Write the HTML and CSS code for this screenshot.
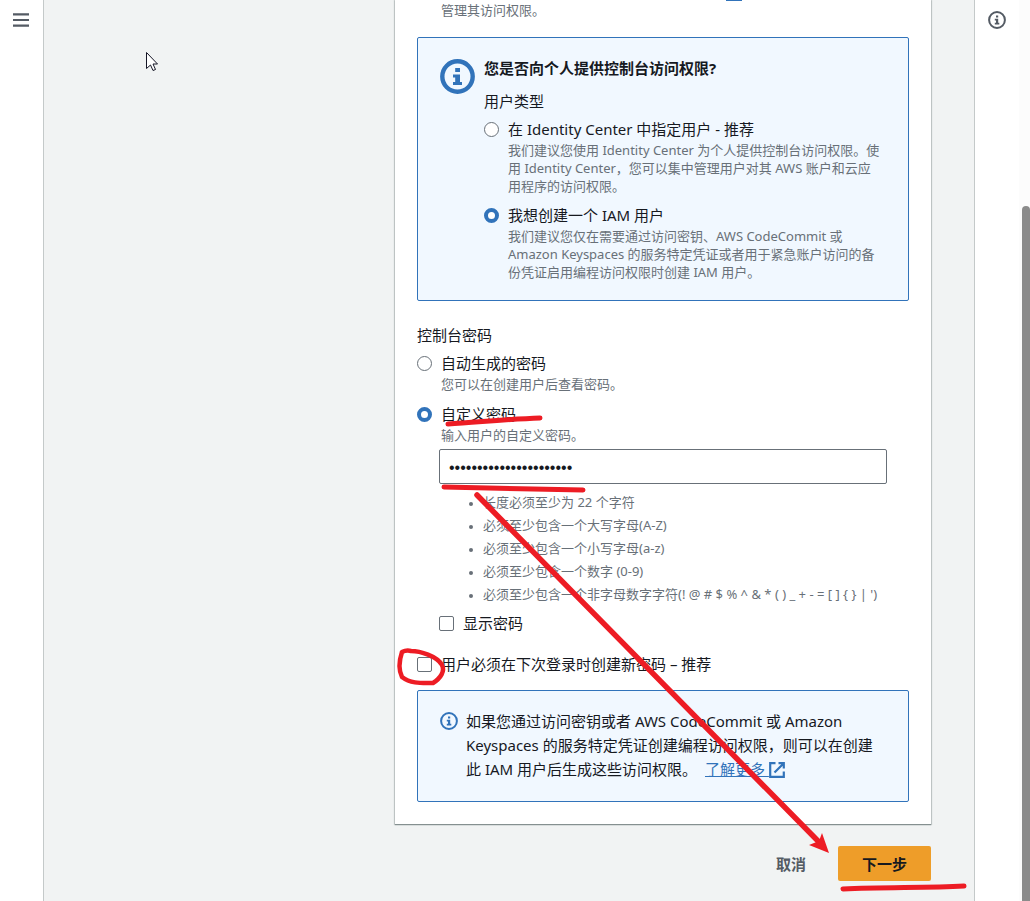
FILE: index.html
```html
<!DOCTYPE html>
<html lang="zh-CN">
<head>
<meta charset="utf-8">
<title>指定用户详细信息</title>
<link rel="stylesheet" href="styles.css">
</head>
<body>
<div class="app">
  <nav class="rail rail-left">
    <button class="icon-button" type="button" aria-label="菜单">
      <svg width="16" height="16" viewBox="0 0 16 16"><path d="M0 2.3h16M0 8h16M0 13.7h16" stroke="#545b64" stroke-width="2.2"/></svg>
    </button>
  </nav>

  <main class="main">
    <form class="card">
      <div class="link-tail"></div>
      <p class="hint intro">管理其访问权限。</p>

      <section class="alert alert-large">
        <svg class="alert-icon" width="35" height="35" viewBox="0 0 35 35"><circle cx="17.500" cy="17.500" r="15.200" fill="none" stroke="#3173ba" stroke-width="4.400"/><path d="M15.200 9h4.800v4h-4.800zM13 15.500h7v7.500h2v3h-9v-3h2.200v-4.500h-2.200z" fill="#3173ba"/></svg>
        <div class="alert-body">
          <h2 class="alert-title">您是否向个人提供控制台访问权限?</h2>
          <fieldset class="group">
            <legend class="label legend-spaced">用户类型</legend>
            <div class="choice">
              <input type="radio" name="user-type" id="identity" aria-describedby="identity-hint">
              <label class="label" for="identity">在 Identity Center 中指定用户 - 推荐</label>
              <p class="hint" id="identity-hint">我们建议您使用 Identity Center 为个人提供控制台访问权限。使<br>用 Identity Center，您可以集中管理用户对其 AWS 账户和云应<br>用程序的访问权限。</p>
            </div>
            <div class="choice">
              <input type="radio" name="user-type" id="iam" checked aria-describedby="iam-hint">
              <label class="label" for="iam">我想创建一个 IAM 用户</label>
              <p class="hint" id="iam-hint">我们建议您仅在需要通过访问密钥、AWS CodeCommit 或<br>Amazon Keyspaces 的服务特定凭证或者用于紧急账户访问的备<br>份凭证启用编程访问权限时创建 IAM 用户。</p>
            </div>
          </fieldset>
        </div>
      </section>

      <fieldset class="group password-group">
        <legend class="label legend-spaced">控制台密码</legend>
        <div class="choice">
          <input type="radio" name="password-type" id="auto" aria-describedby="auto-hint">
          <label class="label" for="auto">自动生成的密码</label>
          <p class="hint" id="auto-hint">您可以在创建用户后查看密码。</p>
        </div>
        <div class="choice">
          <input type="radio" name="password-type" id="custom" checked aria-describedby="custom-hint">
          <label class="label" for="custom">自定义密码</label>
          <p class="hint" id="custom-hint">输入用户的自定义密码。</p>
        </div>
        <div class="password-detail">
          <input class="password" type="password" value="Example-Password-22chr" aria-label="自定义密码" aria-describedby="rules">
          <ul class="rules" id="rules">
            <li>长度必须至少为 22 个字符</li>
            <li>必须至少包含一个大写字母(A-Z)</li>
            <li>必须至少包含一个小写字母(a-z)</li>
            <li>必须至少包含一个数字 (0-9)</li>
            <li>必须至少包含一个非字母数字字符(! @ # $ % ^ &amp; * ( ) _ + - = [ ] { } | ')</li>
          </ul>
          <div class="choice">
            <input type="checkbox" id="show">
            <label class="label" for="show">显示密码</label>
          </div>
        </div>
      </fieldset>

      <div class="choice reset-choice">
        <input type="checkbox" id="reset">
        <label class="label" for="reset">用户必须在下次登录时创建新密码 – 推荐</label>
      </div>

      <section class="alert alert-small">
        <svg class="alert-icon" width="18" height="18" viewBox="0 0 18 18"><circle cx="9" cy="9" r="7.900" fill="none" stroke="#3173ba" stroke-width="2"/><path d="M8 4.500h2.200v2h-2.200zM6.800 7.700h3.400v4.100h1.100v1.700h-4.500v-1.700h1.200v-2.400h-1.200z" fill="#3173ba"/></svg>
        <p class="alert-text">如果您通过访问密钥或者 AWS CodeCommit 或 Amazon<br>Keyspaces 的服务特定凭证创建编程访问权限，则可以在创建<br>此 IAM 用户后生成这些访问权限。 <a class="link" href="#">了解更多 <svg width="16" height="16" viewBox="0 0 16 16"><path d="M6.500 1.200H1.200v13.600h13.600V9.500M9.500 1.200h5.300v5.300M14.300 1.700L5.500 10.500" fill="none" stroke="#3173ba" stroke-width="2.200"/></svg></a></p>
      </section>
    </form>

    <div class="actions">
      <button class="button" type="button">取消</button>
      <button class="button button-primary" type="button">下一步</button>
    </div>
  </main>

  <aside class="rail rail-right">
    <button class="icon-button" type="button" aria-label="信息">
      <svg width="18" height="18" viewBox="0 0 18 18"><circle cx="9" cy="9" r="7.900" fill="none" stroke="#545b64" stroke-width="2"/><path d="M8 4.500h2.200v2h-2.200zM6.800 7.700h3.400v4.100h1.100v1.700h-4.500v-1.700h1.200v-2.400h-1.200z" fill="#545b64"/></svg>
    </button>
  </aside>
  <div class="scroll-track"><div class="scroll-thumb"></div></div>
</div>

<svg class="annotations" width="1030" height="901" viewBox="0 0 1030 901" aria-hidden="true">
  <g fill="none" stroke="#ed1c24" stroke-width="5" stroke-linecap="round" stroke-linejoin="round">
    <path d="M448 424C480 422 510 419 540 418"/>
    <path d="M444 487L583 490"/>
    <path d="M477 495L818 841" stroke-width="5.500"/>
    <path d="M402 652C398 664 399 671 402 677C411 684 422 683 433 683C441 678 445 671 442 665C437 656 420 651 411 651C407 650 404 651 402 652" stroke-width="4.500"/>
    <path d="M843 889C885 887 925 888 964 886"/>
  </g>
  <path d="M829 853L822 833L819 841L809 845Z" fill="#ed1c24"/>
</svg>
<svg class="pointer" width="14" height="21" viewBox="0 0 14 21" aria-hidden="true"><path d="M.5.500V16.500L4.500 13L7 18.500L9.500 17.500L7 12H11.500Z" fill="#fff" stroke="#151525" stroke-width="1"/></svg>
</body>
</html>
```
FILE: styles.css
```css
* {
  box-sizing: border-box;
}

body {
  margin: 0;
  color: #16191f;
  background: #f1f3f3;
  font-family: "Noto Sans", "Noto Sans CJK SC", sans-serif;
  font-size: 15px;
  line-height: 24px;
}

p, h2, ul, fieldset {
  margin: 0;
  padding: 0;
}

.app {
  display: flex;
  min-height: 100vh;
}

.rail {
  flex: none;
  background: #fff;
}

.rail-left {
  width: 44px;
  padding: 12px 0 0 13px;
  border-right: 1px solid #c4c9c9;
}

.rail-right {
  width: 45px;
  padding: 11px 0 0 13px;
  border-left: 1px solid #c4c9c9;
}

.icon-button {
  display: block;
  padding: 0;
  border: 0;
  background: none;
}

.icon-button svg {
  display: block;
}

.scroll-track {
  flex: none;
  width: 11px;
  padding: 206px 0 0 3px;
  display: flex;
  background: #fcfcfc;
}

.scroll-thumb {
  flex: 1;
  border-radius: 4px 4px 0 0;
  background: #8b8b8b;
}

.main {
  flex: 1;
  min-width: 0;
  padding: 0 43px 20px 351px;
}

.card {
  padding: 0 22px 22px;
  background: #fff;
  box-shadow: 0 1px 1px #859090, 0 0 1px 1px #c9cece;
}

.link-tail {
  width: 16px;
  height: 1px;
  margin-left: 309px;
  background: #3173ba;
}

.hint {
  color: #687078;
  font-size: 13px;
  line-height: 18px;
}

.intro {
  margin: 0 0 18px 24px;
}

.alert {
  display: flex;
  border: 1px solid #3173ba;
  border-radius: 2px;
  background: #f1f8ff;
}

.alert-large {
  gap: 9px;
  padding: 18px 22px 19px;
}

.alert-small {
  gap: 8px;
  padding: 18px 22px 20px;
}

.alert-icon {
  flex: none;
  margin-top: 3px;
}

.alert-body,
.alert-text {
  flex: 1;
  white-space: nowrap;
}

.alert-title {
  margin-bottom: 9px;
  font-size: 15px;
  font-weight: 700;
  line-height: 24px;
}

.group {
  min-width: 0;
  border: 0;
}

.legend-spaced {
  padding: 0;
  margin-bottom: 4px;
}

.choice {
  display: grid;
  grid-template-columns: 15px 1fr;
  column-gap: 9px;
  align-items: center;
}

.choice + .choice {
  margin-top: 8px;
}

.choice .hint {
  grid-column: 2;
}

.choice input {
  width: 15px;
  height: 15px;
  margin: 0;
  appearance: none;
  border: 1px solid #687078;
  border-radius: 2px;
  background: #fff;
}

.choice input[type="radio"] {
  border-radius: 50%;
}

.choice input[type="radio"]:checked {
  border: 4px solid #3173ba;
}

.password-group {
  margin-top: 22px;
}

.password-group .choice + .choice {
  margin-top: 9px;
}

.password-detail {
  margin: 5px 22px 0;
}

.password {
  display: block;
  width: 100%;
  height: 35px;
  padding: 2px 9px 0;
  border: 1px solid #687078;
  border-radius: 2px;
  color: #16191f;
  background: #fff;
  font-family: "Liberation Sans", sans-serif;
  font-size: 16px;
}

.rules {
  margin: 7px 0 5px;
  padding-left: 44px;
  color: #687078;
  font-size: 13px;
  line-height: 23px;
  white-space: nowrap;
}

.rules li::marker {
  font-size: 10px;
}

.reset-choice {
  margin: 17px 0 14px;
}

.link {
  margin-left: 4px;
  color: #3173ba;
}

.link svg {
  vertical-align: -3px;
}

.actions {
  display: flex;
  justify-content: flex-end;
  gap: 8px;
  padding-top: 22px;
}

.button {
  height: 35px;
  padding: 0 24px;
  border: 0;
  border-radius: 2px;
  color: #545b64;
  background: transparent;
  font: inherit;
  font-weight: 700;
}

.button-primary {
  color: #16191f;
  background: #ee9d29;
}

.annotations {
  position: absolute;
  top: 0;
  left: 0;
  pointer-events: none;
}

.pointer {
  position: absolute;
  top: 52px;
  left: 146px;
  pointer-events: none;
}
```
